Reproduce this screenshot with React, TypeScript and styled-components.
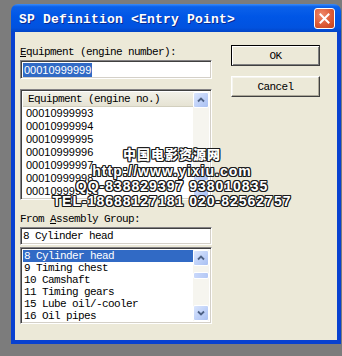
import React from "react";
import styled, { createGlobalStyle } from "styled-components";

const MONO = `"Liberation Mono", "DejaVu Sans Mono", monospace`;
const SANS = `"Liberation Sans", Arial, sans-serif`;

const GlobalStyle = createGlobalStyle`
  html, body {
    margin: 0;
    padding: 0;
    background: #7c7c7c;
  }
`;

const Screen = styled.div`
  position: relative;
  width: 342px;
  height: 356px;
  box-sizing: border-box;
  padding: 4px 0 0 11px;
  background: #7c7c7c;
  overflow: hidden;
`;

const Window = styled.div`
  width: 330px;
  display: flex;
  flex-direction: column;
`;

const TitleBar = styled.div`
  height: 28px;
  display: flex;
  align-items: center;
  justify-content: space-between;
  padding: 0 6px 0 8px;
  border-radius: 7px 7px 0 0;
  background: linear-gradient(
    to bottom,
    #3c8cf6 0%,
    #0b61ea 10%,
    #0056e6 45%,
    #0152df 85%,
    #0244c6 100%
  );
`;

const Title = styled.span`
  font-family: ${MONO};
  font-weight: bold;
  font-size: 13px;
  letter-spacing: 0.2px;
  color: #fff;
  text-shadow: 1px 1px 0 #0b2a8f;
  padding-top: 2px;
`;

const CloseButton = styled.div`
  width: 19px;
  height: 19px;
  border: 1px solid #fff;
  border-radius: 3px;
  display: flex;
  align-items: center;
  justify-content: center;
  background: radial-gradient(circle at 35% 30%, #ef8a6c 0%, #dd5b36 55%, #c2401b 100%);
`;

const Body = styled.div`
  display: flex;
  gap: 19px;
  padding: 13px 17px 16px 5px;
  background: #ece9d8;
  border: 4px solid #0841d0;
  border-top: none;
`;

const LeftColumn = styled.div`
  width: 192px;
  display: flex;
  flex-direction: column;
`;

const RightColumn = styled.div`
  width: 89px;
  display: flex;
  flex-direction: column;
  gap: 10px;
`;

const FieldLabel = styled.div<{ $gap: number }>`
  font-family: ${MONO};
  font-size: 11px;
  letter-spacing: -0.6px;
  line-height: 14px;
  height: 14px;
  color: #000;
  margin-top: ${(p) => p.$gap}px;
  margin-bottom: 1px;
  white-space: pre;
`;

const sunken = `
  box-sizing: border-box;
  border-top: 1px solid #848284;
  border-left: 1px solid #848284;
  border-right: 1px solid #fff;
  border-bottom: 1px solid #fff;
  box-shadow: inset 1px 1px 0 #404040, inset -1px -1px 0 #d4d0c8;
  background: #fff;
`;

const TextBox = styled.div<{ $height: number; $mono?: boolean }>`
  ${sunken}
  height: ${(p) => p.$height}px;
  display: flex;
  align-items: center;
  padding: 0 2px;
  font-family: ${(p) => (p.$mono ? MONO : SANS)};
  font-size: 11px;
  letter-spacing: ${(p) => (p.$mono ? "-0.6px" : "0")};
  white-space: pre;
  color: #000;
`;

const SelectedText = styled.span`
  background: #316ac5;
  color: #fff;
  line-height: 14px;
  padding: 0 1px;
`;

const ListBox = styled.div<{ $height: number; $gap: number }>`
  ${sunken}
  height: ${(p) => p.$height}px;
  margin-top: ${(p) => p.$gap}px;
  display: flex;
  padding: 2px;
  overflow: hidden;
`;

const ListContent = styled.div`
  flex: 1;
  display: flex;
  flex-direction: column;
`;

const ListHeader = styled.div`
  height: 15px;
  flex-shrink: 0;
  display: flex;
  align-items: center;
  padding-left: 5px;
  background: linear-gradient(to bottom, #f2f1e8, #e6e3d3);
  border-bottom: 1px solid #d2cfbe;
  box-sizing: border-box;
  font-family: ${MONO};
  font-size: 11px;
  letter-spacing: -0.6px;
  white-space: pre;
  color: #000;
`;

const NumberRow = styled.div`
  height: 13px;
  line-height: 13px;
  padding-left: 3px;
  font-family: ${SANS};
  font-size: 11px;
  color: #000;
  flex-shrink: 0;
`;

const GroupRow = styled.div<{ $selected?: boolean }>`
  height: 12px;
  line-height: 12px;
  padding-left: 1px;
  font-family: ${MONO};
  font-size: 11px;
  letter-spacing: -0.6px;
  white-space: pre;
  flex-shrink: 0;
  color: ${(p) => (p.$selected ? "#fff" : "#000")};
  background: ${(p) => (p.$selected ? "#316ac5" : "transparent")};
`;

const ScrollBar = styled.div`
  width: 16px;
  flex-shrink: 0;
  display: flex;
  flex-direction: column;
  background: #f6f5ef;
`;

const ScrollButton = styled.div`
  width: 16px;
  height: 16px;
  flex-shrink: 0;
  box-sizing: border-box;
  border: 1px solid #fff;
  border-radius: 2px;
  display: flex;
  align-items: center;
  justify-content: center;
  background: linear-gradient(135deg, #dbe6fd 0%, #bccff8 60%, #a9c0f2 100%);
`;

const Thumb = styled.div<{ $height: number; $top: number }>`
  height: ${(p) => p.$height}px;
  margin-top: ${(p) => p.$top}px;
  box-sizing: border-box;
  border: 1px solid #fff;
  border-radius: 2px;
  background: linear-gradient(to right, #c9d8fb, #b4c8f5);
  flex-shrink: 0;
`;

const Track = styled.div`
  flex: 1;
`;

const Button = styled.div<{ $default?: boolean }>`
  height: 21px;
  box-sizing: border-box;
  display: flex;
  align-items: center;
  justify-content: center;
  background: #ece9d8;
  font-family: ${MONO};
  font-size: 11px;
  letter-spacing: -0.6px;
  color: #000;
  border-top: 1px solid ${(p) => (p.$default ? "#000" : "#fff")};
  border-left: 1px solid ${(p) => (p.$default ? "#000" : "#fff")};
  border-right: 1px solid #404040;
  border-bottom: 1px solid #404040;
  box-shadow: ${(p) =>
    p.$default
      ? "inset 1px 1px 0 #fff, inset -1px -1px 0 #808080"
      : "inset -1px -1px 0 #aca899, inset 1px 1px 0 #f5f4ee"};
`;

const Watermark = styled.div`
  position: absolute;
  top: 146px;
  left: 0;
  width: 344px;
  text-align: center;
  pointer-events: none;
  color: #fff;
  font-family: ${SANS};
  font-weight: bold;
  white-space: nowrap;
  text-shadow: -1px -1px 0 #1b1b1b, 1px -1px 0 #1b1b1b, -1px 1px 0 #1b1b1b,
    1px 1px 0 #1b1b1b, 0 1px 0 #1b1b1b, 1px 0 0 #1b1b1b, 0 -1px 0 #1b1b1b,
    -1px 0 0 #1b1b1b;
`;

const WatermarkLine = styled.div<{ $size: number; $cjk?: boolean }>`
  height: 15px;
  line-height: 15px;
  font-size: ${(p) => p.$size}px;
  letter-spacing: 1px;
  font-weight: 900;
  font-family: ${(p) =>
    p.$cjk ? `"Noto Sans CJK SC", sans-serif` : SANS};
  &:first-child {
    height: 18px;
  }
`;

function Chevron({ up }: { up?: boolean }) {
  return (
    <svg width="8" height="6" viewBox="0 0 8 6">
      <polyline
        points={up ? "1,4.5 4,1.5 7,4.5" : "1,1.5 4,4.5 7,1.5"}
        fill="none"
        stroke="#4d6185"
        strokeWidth="1.8"
      />
    </svg>
  );
}

const engineNumbers = [
  "00010999993",
  "00010999994",
  "00010999995",
  "00010999996",
  "00010999997",
  "00010999998",
  "00010999999",
];

const groups = [
  "8 Cylinder head",
  "9 Timing chest",
  "10 Camshaft",
  "11 Timing gears",
  "15 Lube oil/-cooler",
  "16 Oil pipes",
];

export default function App() {
  return (
    <>
      <GlobalStyle />
      <Screen>
        <Window>
          <TitleBar>
            <Title>SP Definition &lt;Entry Point&gt;</Title>
            <CloseButton>
              <svg width="11" height="11" viewBox="0 0 11 11">
                <path
                  d="M1.5 1.5 L9.5 9.5 M9.5 1.5 L1.5 9.5"
                  stroke="#fff"
                  strokeWidth="2"
                  strokeLinecap="square"
                />
              </svg>
            </CloseButton>
          </TitleBar>
          <Body>
            <LeftColumn>
              <FieldLabel $gap={0}>
                <u>E</u>quipment (engine number):
              </FieldLabel>
              <TextBox $height={19}>
                <SelectedText>00010999999</SelectedText>
              </TextBox>
              <ListBox $height={111} $gap={10}>
                <ListContent>
                  <ListHeader>Equipment (engine no.)</ListHeader>
                  {engineNumbers.map((n) => (
                    <NumberRow key={n}>{n}</NumberRow>
                  ))}
                </ListContent>
                <ScrollBar>
                  <ScrollButton>
                    <Chevron up />
                  </ScrollButton>
                  <Track />
                  <Thumb $height={12} $top={0} />
                  <ScrollButton>
                    <Chevron />
                  </ScrollButton>
                </ScrollBar>
              </ListBox>
              <FieldLabel $gap={12}>
                From <u>A</u>ssembly Group:
              </FieldLabel>
              <TextBox $height={18} $mono>
                8 Cylinder head
              </TextBox>
              <ListBox $height={77} $gap={2}>
                <ListContent>
                  {groups.map((g, i) => (
                    <GroupRow key={g} $selected={i === 0}>
                      {g}
                    </GroupRow>
                  ))}
                </ListContent>
                <ScrollBar>
                  <ScrollButton>
                    <Chevron up />
                  </ScrollButton>
                  <Thumb $height={7} $top={6} />
                  <Track />
                  <ScrollButton>
                    <Chevron />
                  </ScrollButton>
                </ScrollBar>
              </ListBox>
            </LeftColumn>
            <RightColumn>
              <Button $default>OK</Button>
              <Button>Cancel</Button>
            </RightColumn>
          </Body>
        </Window>
        <Watermark>
          <WatermarkLine $size={13} $cjk>
            中国电影资源网
          </WatermarkLine>
          <WatermarkLine $size={14}>http://www.yixiu.com</WatermarkLine>
          <WatermarkLine $size={14}>QQ-838829397 938010835</WatermarkLine>
          <WatermarkLine $size={14}>TEL-18688127181 020-82562757</WatermarkLine>
        </Watermark>
      </Screen>
    </>
  );
}
